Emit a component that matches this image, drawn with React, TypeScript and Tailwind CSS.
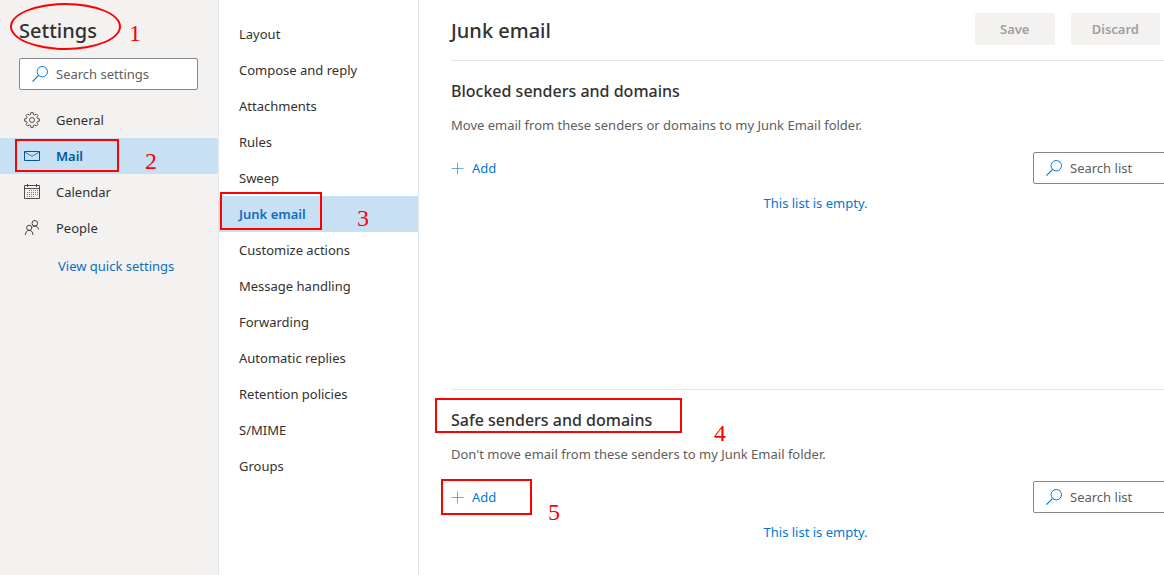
import type { ReactNode } from "react";

const categories = [
  { label: "General", icon: <GearIcon /> },
  { label: "Mail", icon: <MailIcon />, mark: "2" },
  { label: "Calendar", icon: <CalendarIcon /> },
  { label: "People", icon: <PeopleIcon /> },
];

const pages = [
  "Layout",
  "Compose and reply",
  "Attachments",
  "Rules",
  "Sweep",
  "Junk email",
  "Customize actions",
  "Message handling",
  "Forwarding",
  "Automatic replies",
  "Retention policies",
  "S/MIME",
  "Groups",
];

function gearPath() {
  const points: string[] = [];
  for (let i = 0; i < 8; i++) {
    const base = (i * Math.PI) / 4;
    const corners = [
      [-0.24, 5.7],
      [-0.17, 7.5],
      [0.17, 7.5],
      [0.24, 5.7],
    ];
    for (const [offset, radius] of corners) {
      const x = 8 + radius * Math.cos(base + offset);
      const y = 8 + radius * Math.sin(base + offset);
      points.push(`${x.toFixed(2)} ${y.toFixed(2)}`);
    }
  }
  return `M${points.join("L")}Z`;
}

function GearIcon() {
  return (
    <svg width="16" height="16" viewBox="0 0 16 16" fill="none" stroke="currentColor" strokeWidth="0.8" strokeLinejoin="round" aria-hidden="true">
      <path d={gearPath()} />
      <circle cx="8" cy="8" r="2.5" />
    </svg>
  );
}

function MailIcon() {
  return (
    <svg width="16" height="16" viewBox="0 0 16 16" fill="none" stroke="currentColor" aria-hidden="true">
      <path d="M0.5 3.5h15v9H0.5z" />
      <path d="M0.5 4L8 8.2L15.5 4" strokeWidth="0.8" />
    </svg>
  );
}

function CalendarIcon() {
  return (
    <svg width="16" height="16" viewBox="0 0 16 16" fill="none" stroke="currentColor" aria-hidden="true">
      <path d="M0.5 1.5h15v13H0.5zM0.5 4.5h15M3.5 0v3M12.5 0v3" strokeOpacity="0.85" />
      <path d="M5 6.5h9M3 8.5h11M3 10.5h11M3 12.5h8" strokeDasharray="1 1" strokeOpacity="0.6" />
    </svg>
  );
}

function PeopleIcon() {
  return (
    <svg width="16" height="16" viewBox="0 0 16 16" fill="none" stroke="currentColor" strokeWidth="0.9" aria-hidden="true">
      <circle cx="5.2" cy="7.8" r="2.6" />
      <path d="M1.4 15C1.5 12 3 10.4 5.2 10.4S8.9 12 9 15" />
      <circle cx="10.8" cy="3.3" r="2.8" />
      <path d="M8.6 7C9.2 6.4 10 6.1 10.8 6.1C13 6.1 14.3 7.4 14.5 9.5" />
    </svg>
  );
}

function SearchIcon() {
  return (
    <svg className="shrink-0 text-[#0078d4]" width="16" height="16" viewBox="0 0 16 16" fill="none" stroke="currentColor" aria-hidden="true">
      <circle cx="10.3" cy="5.7" r="5.2" />
      <path d="M6.6 9.4L0.4 15.6" strokeWidth="1.2" />
    </svg>
  );
}

function PlusIcon() {
  return (
    <svg width="13" height="13" viewBox="0 0 13 13" fill="none" stroke="currentColor" aria-hidden="true">
      <path d="M6.5 0.5v12M0.5 6.5h12" strokeOpacity="0.6" />
    </svg>
  );
}

function SearchBox({ label }: { label: string }) {
  return (
    <label className="flex h-8 items-center gap-2 rounded-xs border border-[#8a8886] bg-white pl-3">
      <SearchIcon />
      <input
        type="search"
        aria-label={label}
        placeholder={label}
        className="w-full min-w-0 bg-transparent outline-none placeholder:text-[#605e5c]"
      />
    </label>
  );
}

function Mark({ className, children }: { className: string; children: ReactNode }) {
  return (
    <span className={`absolute font-["Liberation_Serif",serif] text-2xl leading-6 font-normal text-[#ff0000] ${className}`}>
      {children}
    </span>
  );
}

function Outline({ className }: { className: string }) {
  return <span className={`pointer-events-none absolute z-10 border-2 border-[#ff0000] ${className}`} />;
}

function SenderSection({ title, description, marked }: { title: string; description: string; marked?: boolean }) {
  return (
    <section className="-mr-4 border-t border-[#e6e6e6] pt-4">
      <h2 className="relative w-fit text-base leading-7 font-medium">
        {title}
        {marked && (
          <>
            <Outline className="-top-2 bottom-px -left-4 w-[247px]" />
            <Mark className="top-[15px] left-[263px]">4</Mark>
          </>
        )}
      </h2>
      <p className="mt-[10px] leading-5 text-[#605e5c]">{description}</p>
      <div className="mt-[17px] flex items-center justify-between">
        <button type="button" className="relative flex h-8 items-center gap-2 text-[#0078d4]">
          <PlusIcon />
          Add
          {marked && (
            <>
              <Outline className="-top-0.5 -bottom-0.5 -left-2.5 w-[91px]" />
              <Mark className="top-[19px] left-[97px]">5</Mark>
            </>
          )}
        </button>
        <div className="w-[147px]">
          <SearchBox label="Search list" />
        </div>
      </div>
      <p className="mt-[9px] text-center leading-5 text-[#0078d4]">This list is empty.</p>
    </section>
  );
}

export default function App() {
  return (
    <div className='flex min-h-screen bg-white font-["Noto_Sans",sans-serif] text-[13px] leading-5 text-[#323130]'>
      <aside className="w-[219px] shrink-0 border-r border-[#e6e6e6] bg-[#f3f2f1]">
        <div className="pt-4 pr-5 pb-3 pl-[19px]">
          <h1 className="relative w-fit text-xl leading-[30px] font-medium">
            Settings
            <Outline className="-top-[13px] -bottom-1 -left-[9px] w-[111px] rounded-[50%]" />
            <Mark className="top-[5px] left-[110px]">1</Mark>
          </h1>
          <div className="mt-3">
            <SearchBox label="Search settings" />
          </div>
        </div>
        <nav aria-label="Categories">
          {categories.map(({ label, icon, mark }) => (
            <a
              key={label}
              href="#"
              aria-current={mark ? "page" : undefined}
              className={`relative flex h-9 items-center gap-4 rounded-r-xs pl-6 ${
                mark ? "bg-[#c7e0f4] font-semibold text-[#005a9e]" : ""
              }`}
            >
              {icon}
              {label}
              {mark && (
                <>
                  <Outline className="top-px bottom-0.5 left-[15px] w-[104px]" />
                  <Mark className="top-[11px] left-[145px]">{mark}</Mark>
                </>
              )}
            </a>
          ))}
        </nav>
        <a href="#" className="mt-[10px] ml-[58px] block leading-5 text-[#106ebe]">
          View quick settings
        </a>
      </aside>

      <nav aria-label="Mail settings" className="w-[200px] shrink-0 border-r border-[#e6e6e6] pt-4">
        {pages.map((page) => {
          const current = page === "Junk email";
          return (
            <a
              key={page}
              href="#"
              aria-current={current ? "page" : undefined}
              className={`relative flex h-9 items-center pl-5 ${
                current ? "bg-[#c7e0f4] font-semibold text-[#106ebe]" : ""
              }`}
            >
              {page}
              {current && (
                <>
                  <Outline className="-top-1 bottom-0.5 left-px w-[102px]" />
                  <Mark className="top-2.5 left-[138px]">3</Mark>
                </>
              )}
            </a>
          );
        })}
      </nav>

      <main className="min-w-0 flex-1 overflow-x-clip pl-8">
        <header className="flex h-[60px] items-center justify-between pr-1">
          <h1 className="pt-0.5 text-xl leading-[30px] font-medium">Junk email</h1>
          <div className="flex gap-4 pb-0.5">
            <button type="button" disabled className="h-8 w-20 rounded-xs bg-[#f3f2f1] font-semibold text-[#a19f9d]">
              Save
            </button>
            <button type="button" disabled className="h-8 rounded-xs bg-[#f3f2f1] px-[21px] font-semibold text-[#a19f9d]">
              Discard
            </button>
          </div>
        </header>
        <div className="flex flex-col gap-44">
          <SenderSection
            title="Blocked senders and domains"
            description="Move email from these senders or domains to my Junk Email folder."
          />
          <SenderSection
            title="Safe senders and domains"
            description="Don't move email from these senders to my Junk Email folder."
            marked
          />
        </div>
      </main>
    </div>
  );
}
